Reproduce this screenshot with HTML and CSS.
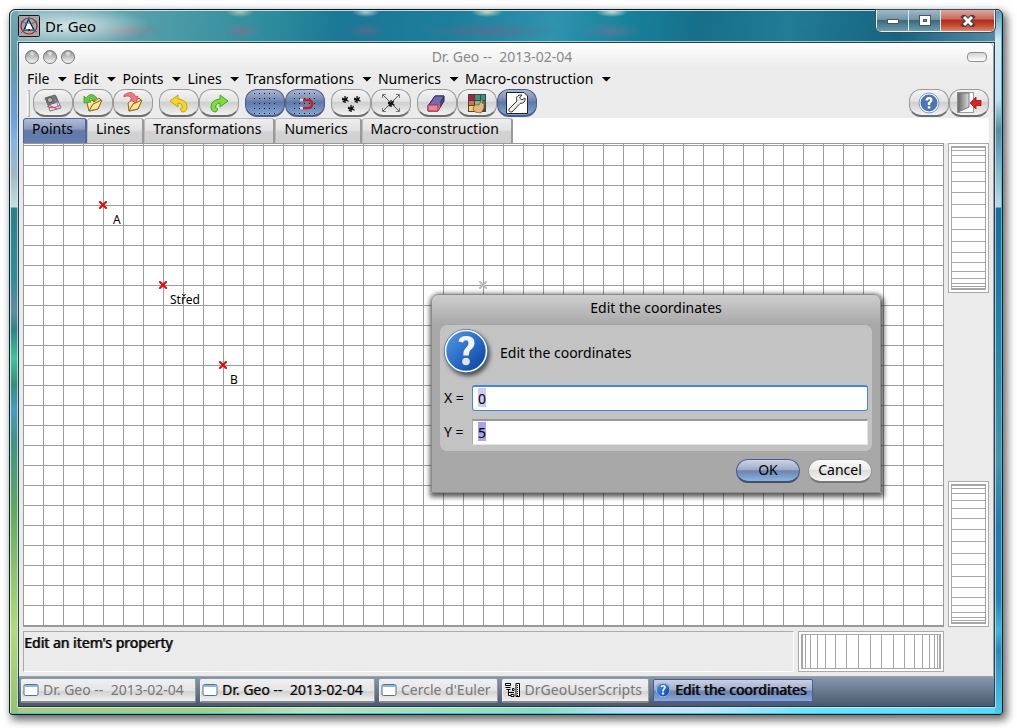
FILE: index.html
```html
<!DOCTYPE html>
<html lang="en">
<head>
<meta charset="utf-8">
<title>Dr. Geo</title>
<link rel="stylesheet" href="styles.css">
</head>
<body>
<svg class="defs" width="0" height="0" aria-hidden="true">
  <defs>
    <linearGradient id="blue" x1="0" y1="0" x2="1" y2="1"><stop offset="0" stop-color="#5b9be8"/><stop offset=".5" stop-color="#2a6cc8"/><stop offset="1" stop-color="#0a3f94"/></linearGradient>
    <linearGradient id="folder" x1="0" y1="0" x2="1" y2="1"><stop offset="0" stop-color="#fffbd0"/><stop offset="1" stop-color="#eec048"/></linearGradient>
    <linearGradient id="door" x1="0" y1="0" x2="1" y2="0"><stop offset="0" stop-color="#666"/><stop offset="1" stop-color="#ddd"/></linearGradient>
    <pattern id="dots" width="5" height="5" patternUnits="userSpaceOnUse"><rect x="2" y="2" width="1" height="1" fill="#0a1020"/></pattern>
    <symbol id="help" viewBox="0 0 48 48">
      <circle cx="24" cy="24" r="22" fill="#2f6fc4"/><circle cx="24" cy="24" r="20.5" fill="url(#blue)" stroke="#fff" stroke-width="1.6"/>
      <path d="M16.500 14.500Q17 9 24.500 9Q32.500 9 32.500 16Q32.500 20 28.500 23Q26.800 24.500 26.800 28.500H21.300Q21 23.500 24 20.800Q27 18 26.500 15.500Q26 13 23.500 13.200Q21.500 13.500 21 15.500Z" fill="#f4f4f4"/><circle cx="24" cy="34.500" r="3.800" fill="#e4e4e4"/>
    </symbol>
    <symbol id="cross" viewBox="0 0 8 8"><path d="M1 1L7 7M7 1L1 7" stroke="currentColor" stroke-width="2" stroke-linecap="square"/></symbol>
    <symbol id="win" viewBox="0 0 16 14"><rect x="1" y="1.500" width="14" height="11" rx="1.500" fill="#fff" stroke="#536f8e"/><path d="M2 3H14" stroke="#8db8dc" stroke-width="2"/></symbol>
    <symbol id="star" viewBox="0 0 8 8"><path d="M3.500 0V8M0 2.500L7.500 6M1 7L6.500 1.500M0 4H6" stroke="#111" stroke-width="1.500"/></symbol>
  </defs>
</svg>
<div class="window">
  <header class="titlebar">
    <svg class="app-icon" width="22" height="22" viewBox="0 0 22 22"><rect x=".5" y=".5" width="21" height="21" rx="1" fill="#aaa5a7" stroke="#161616"/><circle cx="11" cy="11" r="8" fill="none" stroke="#a82030" stroke-width="1.200"/><path d="M10.500 4.500L6 15H16Z" fill="#fff" stroke="#101828" stroke-width="1.200"/><path d="M11 1.500V9M8 13L3 18M14 13L19 17M3 6L9 9M19 6L13 9" fill="none" stroke="#1474bd"/><circle cx="11" cy="15" r="1" fill="#111"/></svg>
    <h1 class="app-title">Dr. Geo</h1>
    <div class="caption-buttons">
      <button class="cap" aria-label="Minimize"><svg width="14" height="12"><rect x="1.500" y="4.500" width="11" height="4" fill="#fff" stroke="#4d5363"/></svg></button>
      <button class="cap" aria-label="Maximize"><svg width="14" height="12"><rect x="1.500" y=".5" width="11" height="10" fill="#fff" stroke="#4d5363"/><rect x="5.500" y="4.500" width="3" height="2" fill="#6b93a5" stroke="#4d5363"/></svg></button>
      <button class="cap close" aria-label="Close"><svg width="16" height="12"><path d="M4 2L12 10M12 2L4 10" stroke="#4b3b48" stroke-width="5" stroke-linecap="square"/><path d="M4 2L12 10M12 2L4 10" stroke="#fff" stroke-width="3"/></svg></button>
    </div>
  </header>
  <div class="client">
    <main class="morph">
      <div class="morph-title">
        <div class="lights"><button class="light" aria-label="Close"></button><button class="light" aria-label="Collapse"></button><button class="light" aria-label="Expand"></button></div>
        <h2 class="morph-name">Dr. Geo --  2013-02-04</h2>
        <button class="pill" aria-label="Window menu"></button>
      </div>
      <nav class="menus">
        <button class="menu">File</button><button class="menu">Edit</button><button class="menu">Points</button><button class="menu">Lines</button><button class="menu">Transformations</button><button class="menu">Numerics</button><button class="menu">Macro-construction</button>
      </nav>
      <div class="toolbar">
        <span class="grip"></span>
        <div class="group">
          <button class="tool" aria-label="New"><svg width="26" height="24"><path d="M7 9L16 5L21 17L10 20Z" fill="#e4e4ee" stroke="#777"/><path d="M5 7L15 4L18 11L8 14Z" fill="#777" stroke="#666"/><circle cx="10" cy="9" r="2.500" fill="#bbb" stroke="#555"/><path d="M7 15Q12 19 20 14M9 14L17 18" fill="none" stroke="#d43a4c"/><path d="M15 8L19 17" stroke="#8896c6"/></svg></button>
          <button class="tool" aria-label="Open"><svg width="26" height="24"><path d="M7 12L12 9L14 11L19 7L21 9L18 18L9 20Z" fill="url(#folder)" stroke="#8a661e"/><path d="M9 20L13 13L22 9L18 18Z" fill="#fbe692" stroke="#8a661e"/><path d="M4 12V5L6 7Q11 0 17 7L14 10Q11 6 9 9L11 11Z" fill="#67c843" stroke="#3c9a2d" stroke-width=".8"/></svg></button>
          <button class="tool" aria-label="Save"><svg width="26" height="24"><path d="M8 12L12 9L14 11L19 7L21 9L18 18L9 20Z" fill="url(#folder)" stroke="#8a661e"/><path d="M9 20L13 13L22 9L18 18Z" fill="#fbe692" stroke="#8a661e"/><path d="M4 4Q12-2 16 6L18 5L16 12L10 9L12 8Q9 3 4 6Z" fill="#f07884" stroke="#c74b58" stroke-width=".8"/></svg></button>
        </div>
        <div class="group">
          <button class="tool" aria-label="Undo"><svg width="26" height="24"><path d="M4 10L12 4V8Q21 9 21 16Q21 21 16 21L14 18Q18 17 16 14Q15 12 12 12V16Z" fill="#f6d620" stroke="#c69f15"/></svg></button>
          <button class="tool" aria-label="Redo"><svg width="26" height="24"><path d="M22 10L14 4V8Q5 9 5 16Q5 21 10 21L12 18Q8 17 10 14Q11 12 14 12V16Z" fill="#7be035" stroke="#4aa02c"/></svg></button>
        </div>
        <div class="group">
          <button class="tool on" aria-label="Grid"><svg width="26" height="24"><rect width="26" height="24" fill="url(#dots)"/></svg></button>
          <button class="tool on" aria-label="Snap to grid"><svg width="26" height="24"><rect width="26" height="24" fill="url(#dots)"/><path d="M10 9H16Q20 9 20 13Q20 17 16 17H10" fill="none" stroke="#c82018" stroke-width="2.500"/><path d="M8 9H11M8 17H11" stroke="#ddd" stroke-width="2.500"/></svg></button>
        </div>
        <div class="group">
          <button class="tool" aria-label="Points cloud"><svg width="26" height="24"><use href="#star" x="4" y="5" width="7" height="7"/><use href="#star" x="16" y="5" width="7" height="7"/><use href="#star" x="10" y="14" width="7" height="7"/></svg></button>
          <button class="tool" aria-label="Move"><svg width="26" height="24"><path d="M5 4L21 20M21 4L5 20" stroke="#555"/><path d="M4.500 7V3.500H8M18 3.500H21.500V7M4.500 17V20.500H8M18 20.500H21.500V17" fill="none" stroke="#777"/><use href="#star" x="10" y="9" width="7" height="7"/></svg></button>
        </div>
        <div class="group">
          <button class="tool" aria-label="Erase"><svg width="26" height="24"><path d="M4 15L11 5H20V10L14 20H4Z" fill="#514e88" stroke="#26233f"/><path d="M4 15L11 5H20L14 15Z" fill="#716bb0" stroke="#393562"/><path d="M4 14H14V20H4Z" fill="#ef8497" stroke="#a43648"/><path d="M14 14L16 11V17L14 20Z" fill="#d65870"/></svg></button>
          <button class="tool" aria-label="Style"><svg width="26" height="24"><rect x="4" y="3" width="18" height="18" fill="#444"/><rect x="5" y="4" width="5" height="5" fill="#a92246"/><rect x="11" y="4" width="5" height="5" fill="#3e966d"/><rect x="17" y="4" width="4" height="5" fill="#29989a"/><rect x="5" y="10" width="5" height="4" fill="#e76942"/><rect x="11" y="10" width="5" height="4" fill="#73bea0"/><rect x="17" y="10" width="4" height="4" fill="#2c8187"/><rect x="5" y="15" width="5" height="5" fill="#f2d36b"/><rect x="11" y="15" width="5" height="5" fill="#dce4b7"/><path d="M18.500 8Q17 8 16.500 11L15 14Q11 13 10 15L9 18L11 21L17 22L20 17V13L18 12Z" fill="#e8b578" stroke="#8a5c2e" stroke-width=".8"/></svg></button>
          <button class="tool on" aria-label="Property"><svg width="26" height="24"><path d="M2.500 1.500H20L23.500 5V22.500H2.500Z" fill="#fff" stroke="#222"/><path d="M5 18L13 10Q11 5 16 4L18 4L15.500 7L18 9L21 7Q22 12 16 12.500L8 21Q4 21 5 18Z" fill="#eee" stroke="#333"/></svg></button>
        </div>
        <div class="group right">
          <button class="tool" aria-label="Help"><svg width="22" height="22" viewBox="0 0 22 22"><circle cx="11" cy="11" r="10" fill="#fff" stroke="#7f9cc9"/><circle cx="11" cy="11" r="8.500" fill="#4a76b8"/><path d="M7.500 8.500Q7.500 5 11 5Q14.500 5 14.500 8Q14.500 10 12.300 11.200V13H9.800V10.500Q12 9.500 12 8.300Q12 7.200 11 7.200Q10 7.200 9.900 8.500ZM9.800 14.200H12.300V16.500H9.800Z" fill="#fff"/></svg></button>
          <button class="tool" aria-label="Quit"><svg width="26" height="24"><rect x="1.500" y="1.500" width="16" height="20" fill="#fff" stroke="#999"/><path d="M2 2H13V16L2 21Z" fill="url(#door)" stroke="#777"/><path d="M14 12L20 6V9.500H25V14.500H20V18Z" fill="#d92424" stroke="#9d1010" stroke-width=".8"/></svg></button>
        </div>
      </div>
      <div class="tabs" role="tablist">
        <button class="tab active" role="tab" aria-selected="true">Points</button><button class="tab" role="tab">Lines</button><button class="tab" role="tab">Transformations</button><button class="tab" role="tab">Numerics</button><button class="tab" role="tab">Macro-construction</button>
      </div>
      <div class="work">
        <section class="sketch" aria-label="Sketch">
          <div class="point a"><svg class="mark"><use href="#cross"/></svg><span class="name">A</span></div>
          <div class="point s"><svg class="mark"><use href="#cross"/></svg><span class="name">Střed</span></div>
          <div class="point b"><svg class="mark"><use href="#cross"/></svg><span class="name">B</span></div>
          <div class="point ghost"><svg class="mark"><use href="#cross"/></svg></div>
          <form class="dialog" aria-label="Edit the coordinates">
            <h3 class="dialog-title">Edit the coordinates</h3>
            <div class="panel">
              <div class="prompt"><svg class="help-icon" width="48" height="48"><use href="#help"/></svg><span>Edit the coordinates</span></div>
              <div class="field"><label class="label" for="x">X =</label><input class="entry focused" id="x" value="0"></div>
              <div class="field"><label class="label" for="y">Y =</label><input class="entry" id="y" value="5"></div>
            </div>
            <div class="actions"><button class="action ok" type="button">OK</button><button class="action" type="button">Cancel</button></div>
          </form>
        </section>
        <aside class="wheels">
          <div class="wheel"><svg width="35" height="144"><path d="M0 1H35M0 143H35" stroke="#a6a6a6" stroke-width="2"/><path d="M.5 0V144M34.500 0V144M0 4.500H35M0 9.500H35M0 16.500H35M0 25.500H35M0 35.500H35M0 46.500H35M0 58.500H35M0 71.500H35M0 83.500H35M0 95.500H35M0 106.500H35M0 116.500H35M0 125.500H35M0 132.500H35M0 137.500H35M0 140.500H35" stroke="#a6a6a6"/></svg></div>
          <div class="wheel"><svg width="35" height="140"><path d="M0 1H35M0 139H35" stroke="#a6a6a6" stroke-width="2"/><path d="M.5 0V140M34.500 0V140M0 4.500H35M0 9.500H35M0 16.500H35M0 24.500H35M0 34.500H35M0 45.500H35M0 57.500H35M0 69.500H35M0 80.500H35M0 92.500H35M0 103.500H35M0 113.500H35M0 121.500H35M0 128.500H35M0 133.500H35M0 136.500H35" stroke="#a6a6a6"/></svg></div>
        </aside>
      </div>
      <footer class="footer">
        <div class="status">Edit an item's property</div>
        <div class="wheel"><svg width="140" height="35"><path d="M1 0V35M139 0V35" stroke="#a6a6a6" stroke-width="2"/><path d="M0 .5H140M0 34.500H140M4.500 0V35M9.500 0V35M16.500 0V35M24.500 0V35M34.500 0V35M45.500 0V35M57.500 0V35M69.500 0V35M80.500 0V35M92.500 0V35M103.500 0V35M113.500 0V35M121.500 0V35M128.500 0V35M133.500 0V35M136.500 0V35" stroke="#a6a6a6"/></svg></div>
      </footer>
    </main>
    <nav class="taskbar">
      <button class="task wide"><svg width="16" height="14"><use href="#win"/></svg>Dr. Geo --  2013-02-04</button>
      <button class="task wide current"><svg width="16" height="14"><use href="#win"/></svg>Dr. Geo --  2013-02-04</button>
      <button class="task"><svg width="16" height="14"><use href="#win"/></svg>Cercle d'Euler</button>
      <button class="task"><svg width="17" height="16"><path d="M1.500 1.500H6.500V3.500H1.500ZM1.500 5.500H6.500M2.500 7.500H6.500M4.500 8V13.500H7M8.500 6.500H10V8.500H8.500ZM5 10.500H10M7 12.500H10V14.500H7Z" fill="#fff" stroke="#000"/><path d="M12 1.500H15.500V14.500H12Z" fill="#fff" stroke="#000"/><path d="M13.500 3V14" stroke="#000" stroke-dasharray="1 1"/></svg>DrGeoUserScripts</button>
      <button class="task selected"><svg width="16" height="16"><use href="#help"/></svg>Edit the coordinates</button>
    </nav>
  </div>
</div>
</body>
</html>
```
FILE: styles.css
```css
* { box-sizing: border-box; }
body {
  margin: 0;
  min-height: 100vh;
  padding: 9px 14px 14px 9px;
  display: flex;
  background: #fff;
  color: #000;
  font: 14px/20px "Noto Sans", "Open Sans", sans-serif;
}
button, input { font: inherit; color: inherit; margin: 0; padding: 0; border: 0; background: none; }
button { white-space: pre; }
h1, h2, h3 { margin: 0; font-weight: 400; }
svg { display: block; flex: none; }
.defs { position: absolute; }

.window {
  flex: 1;
  min-width: 0;
  display: flex;
  flex-direction: column;
  padding: 0 7px 7px 8px;
  border: 1px solid #0c1c24;
  border-radius: 6px 6px 3px 3px;
  background:
    linear-gradient(#76a6b4 0, #5f9ba5 50px, #6fa0d8 110px, #86b4e0 130px, #9fb8c4 165px, #c8dedd 197px, #2a8288 198px, #338b96 270px, #5f8ea0 300px, #2f8584 320px, #3fc49a 348px, #348e7c 375px, #4a9cc0 400px, #3d9484 430px, #62a860 500px, #8cc468 560px, #b2dc78 620px, #98c070 100%) left / 8px 100% no-repeat,
    linear-gradient(#6694ae 0, #d8e6f0 30px, #c8dcec 90px, #66869c 120px, #7ba5bc 145px, #c4d8e0 197px, #1f6b98 198px, #2a82a8 330px, #4b93a8 450px, #2878b0 520px, #2c80b4 590px, #48b4d8 620px, #2f86b8 640px, #50c8e8 100%) right / 7px 100% no-repeat,
    linear-gradient(90deg, #b4c878 0, #a4d080 20%, #c0e0b8 30%, #8cdcb8 54%, #c8dcf8 62%, #c8e4f8 70%, #74e0f8 80%, #5cd8f8 100%) bottom / 100% 8px no-repeat,
    radial-gradient(ellipse 80px 20px at 60px 16px, rgba(255,255,255,.7), transparent),
    radial-gradient(ellipse 36px 9px at 118px 21px, rgba(170,100,125,.4), transparent),
    radial-gradient(ellipse 20px 8px at 232px 21px, rgba(150,110,135,.5), transparent),
    radial-gradient(ellipse 20px 8px at 356px 21px, rgba(120,100,140,.5), transparent),
    radial-gradient(ellipse 70px 9px at 480px 21px, rgba(110,100,140,.5), transparent),
    radial-gradient(ellipse 30px 8px at 602px 21px, rgba(130,110,150,.5), transparent),
    radial-gradient(ellipse 14px 5px at 230px 2px, rgba(235,235,200,.6), transparent),
    radial-gradient(ellipse 14px 5px at 356px 2px, rgba(235,235,240,.7), transparent),
    radial-gradient(ellipse 16px 5px at 477px 2px, rgba(240,235,190,.8), transparent),
    radial-gradient(ellipse 16px 5px at 602px 2px, rgba(240,240,220,.8), transparent),
    linear-gradient(100deg, #8cb4ba 0, #559faa 12%, #2c8b9c 24%, #1a7795 30%, #1d7f9c 40%, #2f93ae 49%, #178099 56%, #176f8a 62%, #217c94 70%, #17647f 80%, #4f86a0 88%, #6c9fb6 96%, #d0dde8 100%);
  box-shadow: inset 1px 1px 0 rgba(230,245,250,.8), inset -1px -1px 0 #20d0f0, 3px 4px 9px 1px rgba(0,0,0,.6);
}
.titlebar { display: flex; align-items: center; gap: 5px; height: 32px; }
.app-title { flex: 1; font-size: 15px; line-height: 20px; }
.caption-buttons {
  display: flex;
  align-self: flex-start;
  height: 22px;
  border: 1px solid #e4f0f4;
  border-top: 0;
  border-radius: 0 0 5px 5px;
  outline: 1px solid #3a4f5e;
  overflow: hidden;
}
.cap {
  width: 32px;
  display: grid;
  place-items: center;
  border-right: 1px solid #dce8ee;
  background: linear-gradient(#a0bac6 0, #7396a6 45%, #3c6a7c 50%, #6c9cae 100%);
}
.cap.close { width: 53px; border: 0; background: linear-gradient(#dba8a0 0, #c86a5c 42%, #b02c18 50%, #c84c30 75%, #d88870 100%); }

.client {
  flex: 1;
  min-height: 0;
  display: flex;
  flex-direction: column;
  border: 1px solid #25404e;
  box-shadow: 0 0 0 1px rgba(215,235,240,.7);
  background: #ebebeb;
}
.morph {
  flex: 1;
  display: flex;
  flex-direction: column;
  padding: 0 4px 4px;
  border-right: 1px solid #a0a0a0;
  border-bottom: 1px solid #a0a0a0;
  border-radius: 5px 5px 0 0;
  background: linear-gradient(#fff 0, #ebebeb 26px);
}
.morph-title { display: flex; align-items: center; height: 26px; padding: 2px 2px 0; color: #888; }
.lights { display: flex; gap: 4px; width: 56px; }
.light {
  width: 14px;
  height: 14px;
  border: 1px solid #777;
  border-radius: 50%;
  background: radial-gradient(circle at 50% 20%, #eee 0, transparent 30%), linear-gradient(#888, #c4c4c4 50%, #f4f4f4);
}
.morph-name { flex: 1; text-align: center; font-size: 14px; line-height: 20px; white-space: pre; }
.pill { width: 20px; height: 10px; margin-left: 44px; border: 1px solid #909090; border-radius: 4px; background: linear-gradient(#d4d4d4, #fff); }

.menus { display: flex; gap: 6px; height: 20px; padding-left: 4px; }
.menu { display: flex; align-items: center; gap: 8px; }
.menu::after { content: ""; width: 10px; height: 5px; background: #000; clip-path: polygon(0 0, 100% 0, 50% 100%); }

.toolbar { display: flex; gap: 6px; height: 29px; padding-left: 4px; }
.grip { width: 3px; height: 27px; margin: 1px -3px 0 0; border: 1px solid #b4b4b4; border-left-color: #fff; background: #ddd; }
.group { display: flex; }
.group.right { margin-left: auto; }
.tool {
  width: 40px;
  height: 28px;
  display: grid;
  place-items: center;
  border: 1px solid #9a9a9a;
  border-bottom: 2px solid #6e6e6e;
  border-radius: 12px;
  background: linear-gradient(#f4f4f4 0, #e2e2e2 45%, #cfcfcf 50%, #f2f2f2 100%);
}
.tool.on { border-color: #4c5c88; background: linear-gradient(#a8b4d0 0, #8496bc 30%, #6078a8 50%, #84a8d4 100%); }

.tabs { display: flex; height: 25px; background: #fff; }
.tab {
  padding: 0 12px 4px 8px;
  border: 1px solid #bbb;
  border-right: 2px solid #999;
  border-bottom: 0;
  border-radius: 3px 3px 0 0;
  background: linear-gradient(#eee 0, #e2e2e2 45%, #d2d2d2 55%, #d0d0d0 100%);
}
.tab.active { border-color: #5064a0; background: linear-gradient(#b4bcd4 0, #8c9cc0 40%, #6079a8 50%, #6580b0 100%); }

.work { flex: 1; display: flex; gap: 4px; min-height: 484px; }
.sketch {
  position: relative;
  flex: 1;
  border: 1px solid #999;
  border-bottom-width: 2px;
  background:
    linear-gradient(90deg, #9b9b9b 1px, transparent 1px) 19px 1px / 20px 20px,
    linear-gradient(#9b9b9b 1px, transparent 1px) 19px 1px / 20px 20px,
    #fff;
}
.point { position: absolute; color: #f00000; }
.mark { width: 8px; height: 8px; }
.name { position: absolute; left: 11px; top: 11px; color: #000; font-size: 12px; line-height: 16px; }
.a { left: 75px; top: 57px; }
.a .name { left: 14px; }
.s { left: 135px; top: 137px; }
.b { left: 195px; top: 217px; }
.ghost { left: 455px; top: 137px; color: #bbb; }

.dialog {
  position: absolute;
  right: 62px;
  top: 150px;
  width: 450px;
  padding: 0 8px 9px;
  border: 1px solid #8c8c8c;
  border-radius: 7px 7px 0 0;
  background: linear-gradient(#cecece 0, #a8a8a8 30px);
  box-shadow: 1px 2px 5px 2px rgba(0,0,0,.65);
}
.dialog-title { height: 30px; padding-top: 3px; font-size: 14px; line-height: 20px; text-align: center; }
.panel { display: flex; flex-direction: column; gap: 8px; padding: 4px 4px 6px; border-radius: 7px; background: #c3c3c3; }
.prompt { display: flex; align-items: center; gap: 10px; height: 48px; }
.help-icon { margin: -4px 0 0 -2px; filter: drop-shadow(2px 3px 2px rgba(0,0,0,.6)); }
.field { display: flex; align-items: center; }
.label { width: 28px; }
.entry {
  flex: 1;
  min-width: 0;
  height: 26px;
  padding: 0 5px 1px;
  border: 1px solid #e4e4e4;
  border-top: 2px solid #999;
  border-left-color: #aaa;
  background: linear-gradient(#a6a6e8, #a6a6e8) 5px 1px / 8px 19px no-repeat, #fff;
}
.entry.focused {
  border: 1px solid #4488d4;
  border-top: 2px solid #4488d4;
  border-radius: 3px;
  background: linear-gradient(#ccccf4, #ccccf4) 5px 1px / 8px 19px no-repeat, #fff;
}
.actions { display: flex; justify-content: flex-end; gap: 8px; padding-top: 8px; }
.action {
  width: 64px;
  height: 24px;
  padding-bottom: 1px;
  border: 1px solid #999;
  border-bottom: 2px solid #777;
  border-radius: 12px;
  background: linear-gradient(#fafafa 0, #ececec 45%, #dcdcdc 50%, #f6f6f6 100%);
}
.ok { border-color: #4a5c94; border-bottom-color: #435068; background: linear-gradient(#d0d4e2 0, #a0acc8 45%, #6c84b0 52%, #8cb4e0 100%); }

.wheels { display: flex; flex-direction: column; justify-content: space-between; }
.wheel { padding: 2px; border: 1px solid #aaa; background: #fff; }
.footer { display: flex; gap: 4px; margin-top: 4px; padding-right: 45px; }
.status {
  flex: 1;
  padding: 1px 0 0;
  border: 1px solid #aaa;
  border-right-color: #fff;
  border-bottom-color: #fff;
  text-shadow: 1px 0 0 rgba(0,0,0,.7);
}

.taskbar { display: flex; gap: 4px; padding: 2px 2px 3px; background: linear-gradient(#8698ae, #4a586c); }
.task {
  display: flex;
  align-items: center;
  gap: 4px;
  height: 24px;
  padding: 0 6px 2px 1px;
  border: 1px solid #f2f2f2;
  border-right-color: #999;
  border-bottom: 2px solid #888;
  border-radius: 2px;
  background: linear-gradient(#f0f0f0 0, #e4e4e4 50%, #d2d2d2 55%, #f0f0f0 100%);
  color: #777;
}
.wide { min-width: 175px; }
.current { color: #000; text-shadow: 1px 0 0 rgba(0,0,0,.35); }
.selected {
  color: #000;
  border-color: #4a5c94;
  background: linear-gradient(#ccd0e0 0, #a4b0cc 45%, #6c84b4 55%, #88a8d4 100%);
  text-shadow: 1px 0 0 rgba(0,0,0,.7);
}
```
